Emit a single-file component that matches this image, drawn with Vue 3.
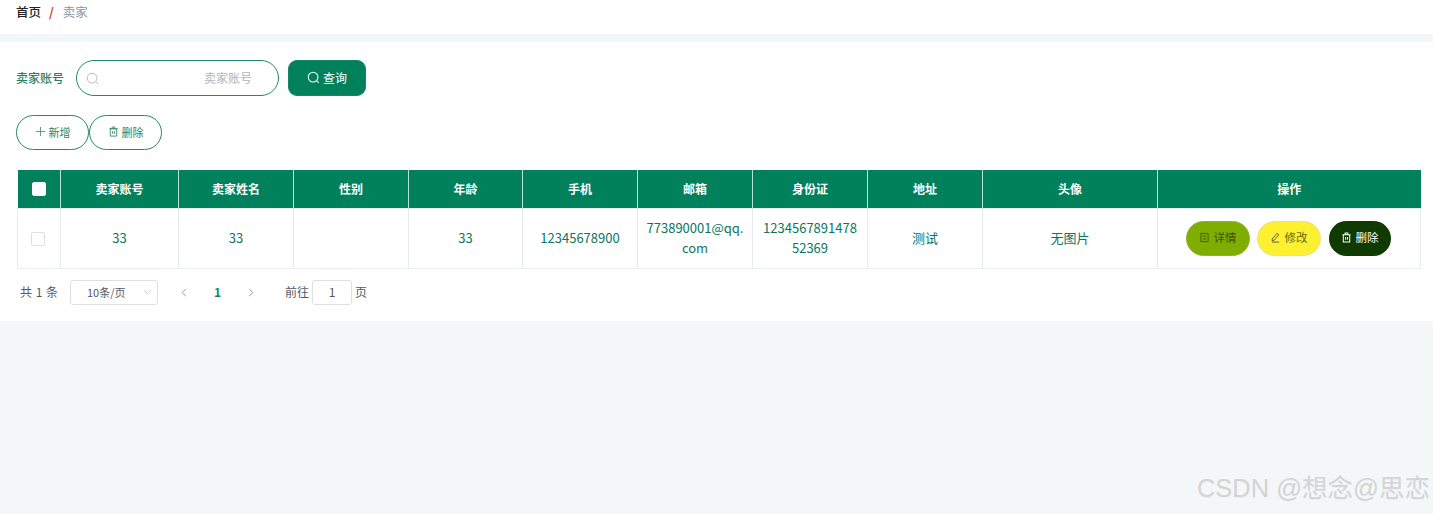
<script setup>
const heads = ['卖家账号', '卖家姓名', '性别', '年龄', '手机', '邮箱', '身份证', '地址', '头像', '操作']
const cells = ['33', '33', '', '33', '12345678900', '773890001@qq.com', '123456789147852369', '测试', '无图片']
const widths = [43, 118, 115, 115, 114, 115, 115, 115, 115, 175, 263]
</script>

<template>
  <div class="page">
    <div class="crumb">
      <span class="crumb-home">首页</span>
      <span class="crumb-sep">/</span>
      <span class="crumb-cur">卖家</span>
    </div>
    <div class="panel">
      <div class="search">
        <span class="search-label">卖家账号</span>
        <div class="search-input">
          <svg class="search-icon" viewBox="0 0 16 16" width="13" height="13" fill="none" stroke="#b4bac2" stroke-width="1.2"><circle cx="7.5" cy="7.5" r="6"/><path d="M12 12l2.5 2.5"/></svg>
          <span class="placeholder">卖家账号</span>
        </div>
        <button class="query">
          <svg viewBox="0 0 16 16" width="13" height="13" fill="none" stroke="#fff" stroke-width="1.3"><circle cx="7.5" cy="7.5" r="6"/><path d="M12 12l2.5 2.5"/></svg>
          查询
        </button>
      </div>
      <div class="actions">
        <button class="ghost">
          <svg viewBox="0 0 12 12" width="11" height="11" fill="none" stroke="#5f8f7d" stroke-width="1"><path d="M6 1v10M1 6h10"/></svg>
          新增
        </button>
        <button class="ghost">
          <svg viewBox="0 0 12 12" width="11" height="11" fill="none" stroke="#3d8b70" stroke-width="1"><path d="M2.5 3h7v8h-7zM1.5 3h9M4.5 3V1.2h3V3M5 5.5v3M7 5.5v3"/></svg>
          删除
        </button>
      </div>
      <table class="grid">
        <colgroup>
          <col v-for="(w, i) in widths" :key="i" :style="{ width: w + 'px' }" />
        </colgroup>
        <thead>
          <tr>
            <th><span class="box box-head"></span></th>
            <th v-for="h in heads" :key="h">{{ h }}</th>
          </tr>
        </thead>
        <tbody>
          <tr>
            <td><span class="box box-body"></span></td>
            <td v-for="(c, i) in cells" :key="i"><div class="cell">{{ c }}</div></td>
            <td>
              <div class="ops">
                <button class="op op-detail">
                  <svg viewBox="0 0 12 12" width="11" height="11" fill="none" stroke="#3f5a00" stroke-width="1"><path d="M2 1.5h8v9H2zM4 4.5h4M4 7.5h4"/></svg>
                  详情
                </button>
                <button class="op op-edit">
                  <svg viewBox="0 0 12 12" width="11" height="11" fill="none" stroke="#555" stroke-width="1"><path d="M7.5 1.5l2 1.5-5 6-2.2.6.2-2.1zM2 11h8"/></svg>
                  修改
                </button>
                <button class="op op-del">
                  <svg viewBox="0 0 12 12" width="11" height="11" fill="none" stroke="#fff" stroke-width="1.1"><path d="M2.5 3h7v8h-7zM1.5 3h9M4.5 3V1.2h3V3M5 5.5v3M7 5.5v3"/></svg>
                  删除
                </button>
              </div>
            </td>
          </tr>
        </tbody>
      </table>
      <div class="pager">
        <span class="total">共 1 条</span>
        <div class="size">
          <span>10条/页</span>
          <svg viewBox="0 0 12 12" width="11" height="11" fill="none" stroke="#c0c4cc" stroke-width="1"><path d="M2 4.5l4 4 4-4"/></svg>
        </div>
        <svg class="arrow arrow-prev" viewBox="0 0 12 12" width="11" height="11" fill="none" stroke="#8f949c" stroke-width="1"><path d="M7.5 2l-4 4 4 4"/></svg>
        <span class="page-num">1</span>
        <svg class="arrow arrow-next" viewBox="0 0 12 12" width="11" height="11" fill="none" stroke="#8f949c" stroke-width="1"><path d="M4.5 2l4 4-4 4"/></svg>
        <span class="goto">前往</span>
        <div class="jump">1</div>
        <span class="unit">页</span>
      </div>
    </div>
    <div class="watermark">CSDN @想念@思恋</div>
  </div>
</template>

<style>
html, body { margin: 0; background: #f4f7f8; }
</style>

<style scoped>
.page {
  position: relative;
  height: 514px;
  overflow: hidden;
  background: #f4f7f8;
  font-family: "Noto Sans CJK SC", "Noto Sans", sans-serif;
  font-size: 12px;
}
.crumb {
  height: 34px;
  box-sizing: border-box;
  padding: 3px 0 0 16px;
  background: #fff;
  display: flex;
  align-items: flex-start;
  line-height: 18px;
  font-size: 12.5px;
}
.crumb-home { color: #222; font-weight: 500; }
.crumb-sep { color: #c8401a; font-weight: 700; margin: 0 9px 0 8px; }
.crumb-cur { color: #8b94a5; }
.panel {
  margin-top: 8px;
  height: 279px;
  background: #fff;
  box-sizing: border-box;
  padding: 18px 13px 0 16px;
}
.search { display: flex; align-items: center; height: 36px; }
.search-label { color: #1f8465; width: 60px; font-weight: 500; padding-bottom: 2px; }
.search-input {
  width: 203px;
  height: 36px;
  box-sizing: border-box;
  border: 1px solid #1f8a6b;
  border-radius: 18px;
  display: flex;
  align-items: center;
  padding: 0 26px 0 9px;
  justify-content: space-between;
}
.placeholder { color: #b0b5bd; padding-bottom: 2px; }
.query {
  margin-left: 9px;
  width: 78px;
  height: 36px;
  border: 1px solid #0e8a66;
  border-radius: 9px;
  background: #01805c;
  color: #fff;
  font: inherit;
  display: flex;
  align-items: center;
  justify-content: center;
  gap: 3px;
  padding: 0 0 2px;
}
.actions { display: flex; margin-top: 19px; }
.ghost {
  width: 73px;
  height: 35px;
  border: 1px solid #1f8a6b;
  border-radius: 18px;
  background: #fff;
  color: #1f8465;
  font: inherit;
  font-size: 11px;
  display: flex;
  align-items: center;
  justify-content: center;
  gap: 3px;
  padding: 0 0 2px;
}
.grid {
  margin: 20px 0 0 1px;
  width: 1403px;
  table-layout: fixed;
  border-collapse: collapse;
}
th {
  height: 38px;
  padding: 0;
  box-sizing: border-box;
  background: #01805c;
  color: #fff;
  font-weight: 700;
  border-left: 1px solid #b5e6d5;
}
th:first-child { border-left: 0; }
td {
  height: 60px;
  padding: 0;
  box-sizing: border-box;
  text-align: center;
  color: #0d7560;
  font-size: 13px;
  border: 1px solid #e8ebef;
}
.cell {
  padding: 0 8px;
  line-height: 20px;
  word-break: break-all;
}
.box {
  display: inline-block;
  width: 12px;
  height: 12px;
  vertical-align: middle;
  background: #fff;
  border: 1px solid #dcdfe6;
  border-radius: 2px;
}
.box-head { border-color: #fff; margin: 0 0 2px 1px; }
.box-body { margin: 0 2px 2px 0; }
.ops { display: flex; justify-content: center; gap: 7px; margin-right: 2px; }
.op {
  width: 64px;
  height: 35px;
  border: 1px solid transparent;
  border-radius: 18px;
  font: inherit;
  font-size: 11.5px;
  display: flex;
  align-items: center;
  justify-content: center;
  gap: 4px;
  padding: 0 0 2px;
}
.op-detail { background: #7fae00; color: #3c5400; border-color: #8cb52a; }
.op-edit { background: #fdf030; color: #5d6a10; border-color: #e4e0a0; }
.op-del { background: #0f3a00; color: #fff; width: 62px; margin-left: 1px; }
.pager {
  display: flex;
  align-items: center;
  height: 26px;
  margin-top: 11px;
  padding-left: 4px;
  color: #555a62;
}
.total { width: 50px; word-spacing: 1px; padding-bottom: 3px; }
.size {
  width: 88px;
  height: 25px;
  box-sizing: border-box;
  border: 1px solid #dcdfe6;
  border-radius: 3px;
  padding: 0 4px 2px 16px;
  display: flex;
  align-items: center;
  justify-content: space-between;
  font-size: 11px;
}
.arrow-prev { margin-left: 21px; }
.page-num { margin-left: 24px; width: 6px; color: #0b8a6c; font-weight: 700; padding-bottom: 3px; }
.arrow-next { margin-left: 25px; }
.goto { margin-left: 29px; padding-bottom: 3px; }
.jump {
  margin-left: 3px;
  width: 40px;
  height: 25px;
  box-sizing: border-box;
  border: 1px solid #dcdfe6;
  border-radius: 3px;
  text-align: center;
  line-height: 21px;
}
.unit { margin-left: 3px; padding-bottom: 3px; }
.watermark {
  position: absolute;
  right: 3px;
  top: 470px;
  font-family: "Liberation Sans", "Noto Sans CJK SC", sans-serif;
  font-size: 25.5px;
  line-height: 36px;
  color: #d2d4d6;
  text-shadow: 0 1px 0 rgba(0, 0, 0, 0.05);
  white-space: nowrap;
}
</style>
